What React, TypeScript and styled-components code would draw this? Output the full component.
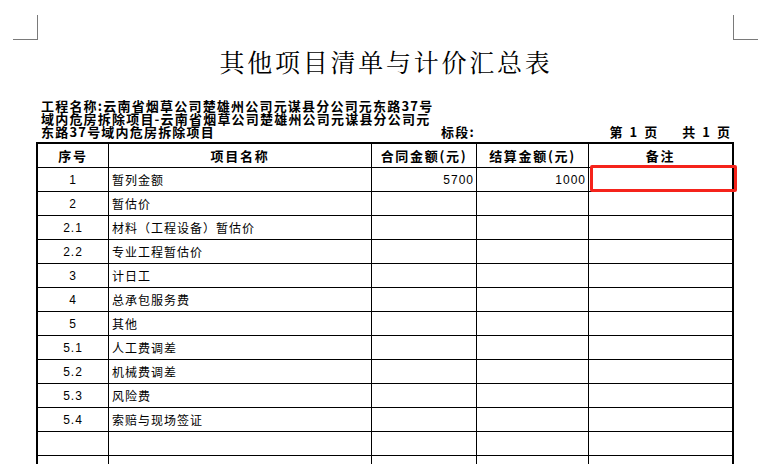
import React from "react";
import styled, { createGlobalStyle } from "styled-components";

const Global = createGlobalStyle`
  html, body {
    margin: 0;
    padding: 0;
    overflow: hidden;
    background: #ffffff;
  }
  #root {
    width: 766px;
    height: 464px;
    overflow: hidden;
  }
`;

const Page = styled.div`
  width: 766px;
  display: flex;
  flex-direction: column;
  color: #000;
`;

const CropRow = styled.div`
  display: flex;
  justify-content: space-between;
  padding: 15px 8px 0 13px;
`;

const CropMark = styled.div<{ $side: "left" | "right" }>`
  width: 24px;
  height: 24px;
  border-bottom: 1px solid #7a7a7a;
  ${(p) =>
    p.$side === "left"
      ? "border-right: 1px solid #7a7a7a;"
      : "border-left: 1px solid #7a7a7a;"}
`;

const Title = styled.h1`
  margin: 6px 0 0 0;
  padding-left: 6px;
  height: 30px;
  line-height: 30px;
  text-align: center;
  font-family: "Noto Serif CJK SC", "Noto Sans CJK SC", serif;
  font-size: 25px;
  font-weight: 400;
  letter-spacing: 2.75px;
`;

const InfoRow = styled.div`
  margin-top: 23px;
  padding: 0 36px 0 41px;
  display: flex;
  align-items: flex-end;
  font-family: "Noto Sans CJK SC", sans-serif;
  font-weight: 700;
  font-size: 13px;
  line-height: 13px;
  letter-spacing: 1.2px;
`;

const ProjectName = styled.div`
  width: 400px;
  display: flex;
  flex-direction: column;
`;

const Line = styled.span`
  display: block;
  white-space: nowrap;
`;

const Section = styled.div`
  flex: 1;
  white-space: nowrap;
`;

const PageNo = styled.div`
  display: flex;
  gap: 7px;
  letter-spacing: 0;
`;

const PageWord = styled.span<{ $wide?: boolean }>`
  margin-left: ${(p) => (p.$wide ? "18px" : "0")};
`;

const Table = styled.div`
  margin: 4px 0 0 36px;
  width: 694px;
  border: 2px solid #000;
  display: grid;
  grid-template-columns: 71px 263px 105px 112px 143px;
  grid-auto-rows: 24px;
`;

type Align = "left" | "center" | "right";

const Cell = styled.div<{ $align: Align; $last?: boolean; $head?: boolean }>`
  position: relative;
  box-sizing: border-box;
  border-bottom: 1px solid #000;
  border-right: ${(p) => (p.$last ? "none" : "1px solid #000")};
  display: flex;
  align-items: center;
  justify-content: ${(p) =>
    p.$align === "left" ? "flex-start" : p.$align === "right" ? "flex-end" : "center"};
  padding: ${(p) =>
    p.$align === "left" ? "0 0 0 3px" : p.$align === "right" ? "0 2px 0 0" : "0"};
  font-family: ${(p) =>
    p.$head ? `"Noto Sans CJK SC", sans-serif` : `"Liberation Sans", "Noto Sans CJK SC", sans-serif`};
  font-weight: ${(p) => (p.$head ? 700 : 400)};
  font-size: ${(p) => (p.$head ? "13px" : "12px")};
  letter-spacing: ${(p) => (p.$head ? "1.7px" : "1px")};
  white-space: nowrap;
`;

const Highlight = styled.div`
  position: absolute;
  left: 1px;
  top: -3px;
  width: 147px;
  height: 27px;
  box-sizing: border-box;
  border: 3px solid #f5231b;
  border-radius: 2px;
  pointer-events: none;
`;

const headers = ["序号", "项目名称", "合同金额(元)", "结算金额(元)", "备注"];

type Row = { no: string; name: string; contract?: string; settle?: string; mark?: boolean };

const rows: Row[] = [
  { no: "1", name: "暂列金额", contract: "5700", settle: "1000", mark: true },
  { no: "2", name: "暂估价" },
  { no: "2.1", name: "材料（工程设备）暂估价" },
  { no: "2.2", name: "专业工程暂估价" },
  { no: "3", name: "计日工" },
  { no: "4", name: "总承包服务费" },
  { no: "5", name: "其他" },
  { no: "5.1", name: "人工费调差" },
  { no: "5.2", name: "机械费调差" },
  { no: "5.3", name: "风险费" },
  { no: "5.4", name: "索赔与现场签证" },
  { no: "", name: "" },
  { no: "", name: "" },
  { no: "", name: "" },
];

export default function App() {
  return (
    <>
      <Global />
      <Page>
        <CropRow>
          <CropMark $side="left" />
          <CropMark $side="right" />
        </CropRow>
        <Title>其他项目清单与计价汇总表</Title>
        <InfoRow>
          <ProjectName>
            <Line>工程名称:云南省烟草公司楚雄州公司元谋县分公司元东路37号</Line>
            <Line>域内危房拆除项目-云南省烟草公司楚雄州公司元谋县分公司元</Line>
            <Line>东路37号域内危房拆除项目</Line>
          </ProjectName>
          <Section>标段:</Section>
          <PageNo>
            <PageWord>第</PageWord>
            <PageWord>1</PageWord>
            <PageWord>页</PageWord>
            <PageWord $wide>共</PageWord>
            <PageWord>1</PageWord>
            <PageWord>页</PageWord>
          </PageNo>
        </InfoRow>
        <Table>
          {headers.map((h, i) => (
            <Cell key={h} $align="center" $head $last={i === headers.length - 1}>
              {h}
            </Cell>
          ))}
          {rows.map((r, i) => (
            <React.Fragment key={i}>
              <Cell $align="center">{r.no}</Cell>
              <Cell $align="left">{r.name}</Cell>
              <Cell $align="right">{r.contract ?? ""}</Cell>
              <Cell $align="right">{r.settle ?? ""}</Cell>
              <Cell $align="left" $last>
                {r.mark && <Highlight />}
              </Cell>
            </React.Fragment>
          ))}
        </Table>
      </Page>
    </>
  );
}
